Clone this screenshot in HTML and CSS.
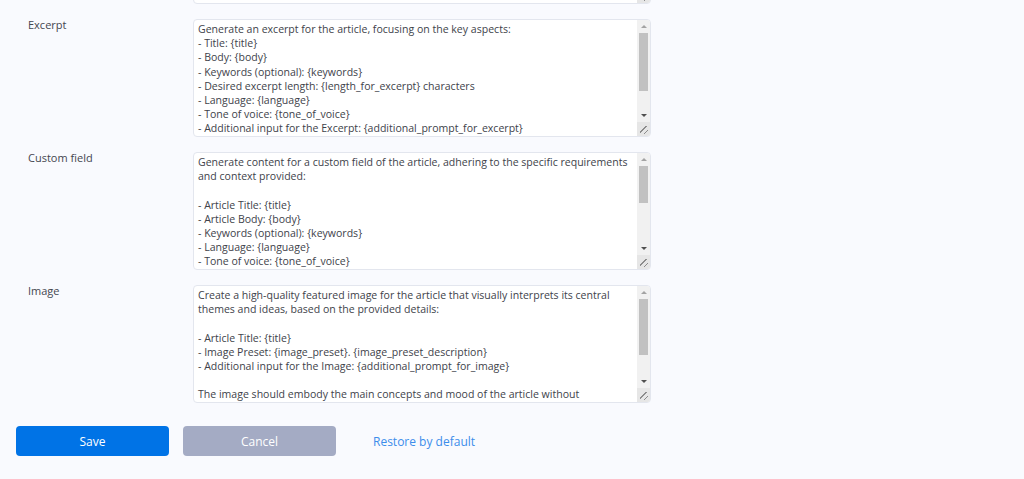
FILE: index.html
```html
<!doctype html>
<html lang="en">

<head>
    <meta charset="UTF-8">
    <meta name="viewport" content="width=device-width, initial-scale=1.0">
    <title>Prompt settings</title>
    <link rel="stylesheet" href="styles.css">
</head>

<body>
    <form class="settings">
        <div class="field field-cut">
            <span class="label"></span>
            <div class="box">
                <textarea id="content" name="content"></textarea>
                <div class="scrollbar">
                    <span class="sb-up"></span>
                    <span class="sb-track"><span class="sb-thumb" style="height: 40px"></span></span>
                    <span class="sb-down"></span>
                    <span class="sb-corner"></span>
                </div>
            </div>
        </div>

        <div class="field">
            <label class="label" for="excerpt">Excerpt</label>
            <div class="box">
                <textarea id="excerpt" name="excerpt">Generate an excerpt for the article, focusing on the key aspects:
- Title: {title}
- Body: {body}
- Keywords (optional): {keywords}
- Desired excerpt length: {length_for_excerpt} characters
- Language: {language}
- Tone of voice: {tone_of_voice}
- Additional input for the Excerpt: {additional_prompt_for_excerpt}

The excerpt should be concise and engaging, summarizing the main idea
of the article in a way that makes the reader want to continue.
Return only the excerpt text.</textarea>
                <div class="scrollbar">
                    <span class="sb-up"></span>
                    <span class="sb-track"><span class="sb-thumb" style="height: 58px"></span></span>
                    <span class="sb-down"></span>
                    <span class="sb-corner"></span>
                </div>
            </div>
        </div>

        <div class="field">
            <label class="label" for="custom_field">Custom field</label>
            <div class="box">
                <textarea id="custom_field" name="custom_field">Generate content for a custom field of the article, adhering to the specific requirements and context provided:

- Article Title: {title}
- Article Body: {body}
- Keywords (optional): {keywords}
- Language: {language}
- Tone of voice: {tone_of_voice}
- Field name: {custom_field_name}
- Field description: {custom_field_description}
- Additional input for the field: {additional_prompt_for_custom_field}

The content should be relevant to the article and fit the purpose
of the field. Keep it accurate, clear and consistent with the tone
of voice of the article.

Do not repeat the title.
Do not add explanations or comments.
Return only the field content.</textarea>
                <div class="scrollbar">
                    <span class="sb-up"></span>
                    <span class="sb-track"><span class="sb-thumb" style="height: 37px"></span></span>
                    <span class="sb-down"></span>
                    <span class="sb-corner"></span>
                </div>
            </div>
        </div>

        <div class="field">
            <label class="label" for="image">Image</label>
            <div class="box">
                <textarea id="image" name="image">Create a high-quality featured image for the article that visually interprets its central themes and ideas, based on the provided details:

- Article Title: {title}
- Image Preset: {image_preset}. {image_preset_description}
- Additional input for the Image: {additional_prompt_for_image}

The image should embody the main concepts and mood of the article without
including any text, letters or words.
Focus on composition, lighting and colour.</textarea>
                <div class="scrollbar">
                    <span class="sb-up"></span>
                    <span class="sb-track"><span class="sb-thumb" style="height: 56px"></span></span>
                    <span class="sb-down"></span>
                    <span class="sb-corner"></span>
                </div>
            </div>
        </div>

        <div class="actions">
            <button type="submit" class="btn btn-save">Save</button>
            <button type="button" class="btn btn-cancel">Cancel</button>
            <a href="#" class="restore">Restore by default</a>
        </div>
    </form>
</body>

</html>
```

FILE: styles.css
```css
body {
    background-color: #f9fafe;
    font-family: 'Open Sans', 'DejaVu Sans', sans-serif;
    color: #3b3d45;
    margin: 0;
    padding: 0;
}

.settings {
    padding: 0 16px;
}

.field {
    display: grid;
    grid-template-columns: 165px 458px;
    padding-left: 12px;
    margin-bottom: 15px;
}

.field-cut {
    margin-top: -114px;
}

.label {
    font-size: 11px;
    line-height: 11px;
    color: #44464f;
}

.box {
    display: flex;
    height: 118px;
    box-sizing: border-box;
    border: 1px solid #e3e6ee;
    border-radius: 4px;
    background-color: #fff;
    overflow: hidden;
}

.box textarea {
    flex: 1;
    min-width: 0;
    margin: 0;
    padding: 2px 0 2px 4px;
    border: none;
    outline: none;
    background: transparent;
    font-family: inherit;
    font-size: 10.55px;
    line-height: 14.2px;
    color: #40424a;
    resize: none;
    overflow: hidden;
}

/* fake classic scrollbar (screenshots hide the native one) */
.scrollbar {
    display: flex;
    flex-direction: column;
    width: 13px;
    background-color: #f1f1f1;
}

.sb-up,
.sb-down {
    position: relative;
    height: 12px;
    flex-shrink: 0;
}

.sb-up::after,
.sb-down::after {
    content: "";
    position: absolute;
    left: 3.5px;
    top: 5px;
    border-left: 3px solid transparent;
    border-right: 3px solid transparent;
}

.sb-up::after {
    border-bottom: 3px solid #a3a3a3;
}

.sb-down::after {
    top: 4px;
    border-top: 3px solid #505050;
}

.sb-track {
    flex: 1;
    display: flex;
    flex-direction: column;
    padding: 1px 2px 0;
}

.sb-thumb {
    background-color: #c1c1c1;
}

.sb-corner {
    height: 14px;
    flex-shrink: 0;
    background-color: #e6e6e6;
    background-repeat: no-repeat;
    background-position: right 2px bottom 2px;
    background-size: 8px 8px;
    background-image:
        linear-gradient(135deg, transparent 4.2px, #8c8c8c 4.2px, #8c8c8c 5.2px, transparent 5.2px),
        linear-gradient(135deg, transparent 7.8px, #8c8c8c 7.8px, #8c8c8c 8.8px, transparent 8.8px);
}

.actions {
    display: flex;
    align-items: center;
    gap: 14px;
    margin-top: 23px;
}

.btn {
    width: 153px;
    height: 30px;
    border: none;
    border-radius: 4px;
    font-family: inherit;
    font-size: 12px;
    color: #fff;
    cursor: pointer;
}

.btn-save {
    background-color: #0073e6;
}

.btn-cancel {
    background-color: #a4abc4;
}

.restore {
    margin-left: 23px;
    font-size: 12px;
    color: #3c8deb;
    text-decoration: none;
}
```
